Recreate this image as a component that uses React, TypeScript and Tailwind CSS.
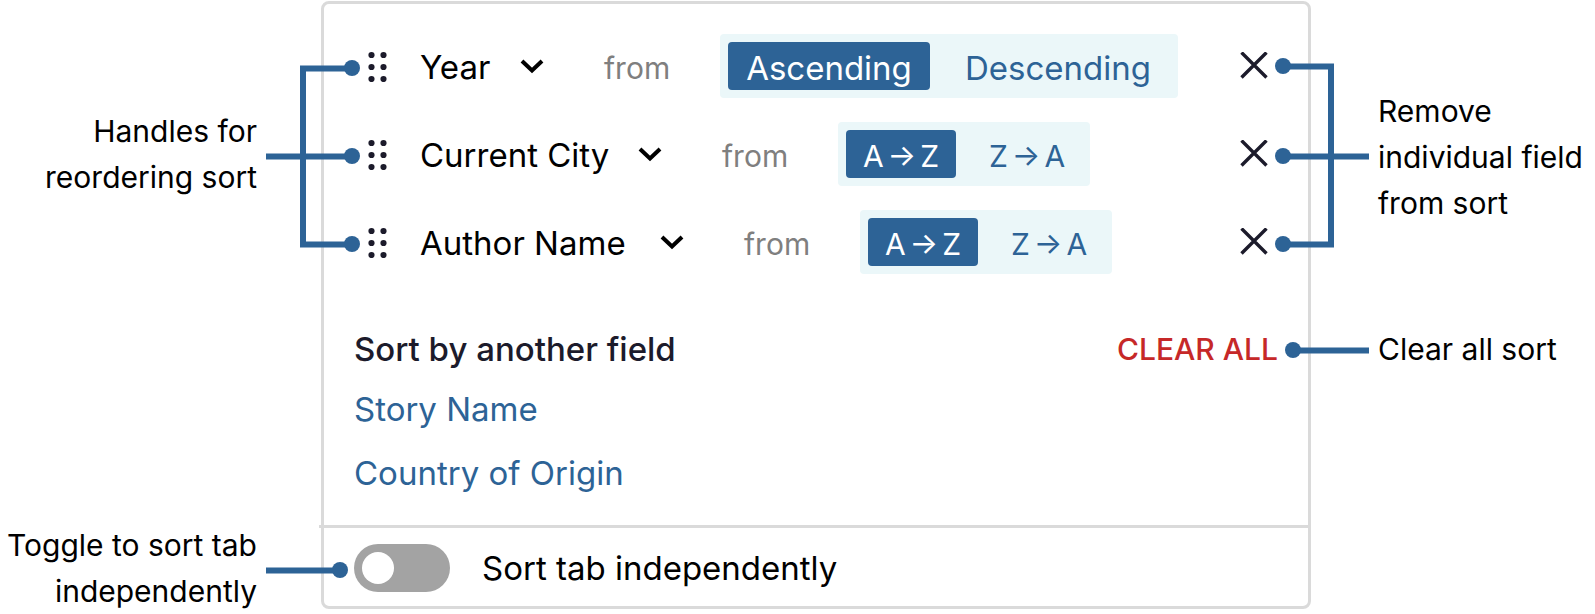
import { useState } from "react";

type SortRow = {
  field: string;
  options: string[];
  selectWidth: string;
  optionWidths: [string, string];
};

const FIELDS = ["Year", "Current City", "Author Name", "Story Name", "Country of Origin"];

const ROWS: SortRow[] = [
  {
    field: "Year",
    options: ["Ascending", "Descending"],
    selectWidth: "w-[124px]",
    optionWidths: ["min-w-[202px]", "min-w-[224px]"],
  },
  {
    field: "Current City",
    options: ["A → Z", "Z → A"],
    selectWidth: "w-[242px]",
    optionWidths: ["min-w-[110px]", "min-w-[110px]"],
  },
  {
    field: "Author Name",
    options: ["A → Z", "Z → A"],
    selectWidth: "w-[264px]",
    optionWidths: ["min-w-[110px]", "min-w-[110px]"],
  },
];

function HandleIcon() {
  return (
    <svg width="20" height="32" viewBox="0 0 20 32" fill="#1c1b2b" aria-hidden="true">
      {[5, 17, 29].map((y) => (
        <g key={y}>
          <circle cx="3.5" cy={y} r="3.1" />
          <circle cx="15.5" cy={y} r="3.1" />
        </g>
      ))}
    </svg>
  );
}

function ChevronIcon() {
  return (
    <svg
      className="pointer-events-none absolute top-1/2 right-0 -translate-y-1/2"
      width="24"
      height="16"
      viewBox="0 0 24 16"
      fill="none"
      stroke="#000"
      strokeWidth="4"
      aria-hidden="true"
    >
      <path d="M2 3 L12 12.5 L22 3" />
    </svg>
  );
}

function CloseIcon() {
  return (
    <svg width="28" height="28" viewBox="0 0 28 28" fill="none" stroke="#1c1b2b" strokeWidth="3.4" aria-hidden="true">
      <path d="M1.5 0.5 L26.5 25.5 M26.5 0.5 L1.5 25.5" />
    </svg>
  );
}

function OptionLabel({ text }: { text: string }) {
  const parts = text.split(" ");
  if (parts.length === 1) return <>{text}</>;
  return (
    <span className="flex items-baseline justify-center gap-1 text-[30px] [font-feature-settings:'case']">
      {parts.map((part) => (
        <span key={part}>{part}</span>
      ))}
    </span>
  );
}

function SortRowItem({ row }: { row: SortRow }) {
  const [active, setActive] = useState(0);
  return (
    <li className="flex h-16 items-center">
      <button type="button" aria-label={`Reorder ${row.field}`} className="ml-3 cursor-grab">
        <HandleIcon />
      </button>
      <div className={`relative ml-8 ${row.selectWidth}`}>
        <select
          aria-label="Sort field"
          defaultValue={row.field}
          className="block w-full cursor-pointer appearance-none bg-transparent pt-0.5 text-black outline-none"
        >
          {FIELDS.map((f) => (
            <option key={f}>{f}</option>
          ))}
        </select>
        <ChevronIcon />
      </div>
      <span className="ml-[60px] w-[68px] pt-1 text-[30px] text-[#7f7f7f]">from</span>
      <div role="group" aria-label="Sort direction" className="ml-12 flex gap-4 rounded bg-[#ebf7f9] p-2">
        {row.options.map((option, i) => (
          <button
            key={option}
            type="button"
            aria-pressed={active === i}
            onClick={() => setActive(i)}
            className={`h-12 rounded pt-0.5 whitespace-nowrap ${row.optionWidths[i]} ${
              active === i ? "bg-[#2d6396] text-white" : "text-[#2d6396]"
            }`}
          >
            <OptionLabel text={option} />
          </button>
        ))}
      </div>
      <button type="button" aria-label={`Remove ${row.field}`} className="mr-2 ml-auto">
        <CloseIcon />
      </button>
    </li>
  );
}

const LABEL = "text-[30px] leading-[46px] text-black";

export default function App() {
  const [independent, setIndependent] = useState(false);
  return (
    <main className="grid grid-cols-[257px_64px_minmax(0,1fr)_67px_217px] bg-white pt-px font-['Inter',sans-serif]">
      <p className={`col-start-1 row-start-1 self-center pb-1 text-right ${LABEL}`}>
        Handles for
        <br />
        reordering sort
      </p>
      <svg
        className="z-10 col-start-2 row-start-1 ml-[9px] self-center justify-self-start"
        width="94"
        height="200"
        viewBox="0 0 94 200"
        aria-hidden="true"
      >
        <path d="M86 12.5 H37 V188.5 H86 M0 100.5 H86" fill="none" stroke="#2d6396" strokeWidth="6" />
        <g fill="#2d6396">
          <circle cx="86" cy="12" r="8" />
          <circle cx="86" cy="100" r="8" />
          <circle cx="86" cy="188" r="8" />
        </g>
      </svg>

      <section
        aria-label="Sort"
        className="col-start-3 row-span-3 row-start-1 grid grid-rows-subgrid rounded-lg border-[3px] border-[#dadada] text-[33px] leading-[48px]"
      >
        <ul className="flex flex-col gap-6 px-8 pt-[30px] pb-[37px]">
          {ROWS.map((row) => (
            <SortRowItem key={row.field} row={row} />
          ))}
        </ul>

        <div className="px-[30px] pt-[14px] pb-7">
          <div className="flex items-center justify-between">
            <h2 className="font-medium text-[#1c1b2b]">Sort by another field</h2>
            <button type="button" className="text-[30px] font-medium text-[#c62828]">
              CLEAR ALL
            </button>
          </div>
          <div className="mt-3 flex flex-col items-start gap-4 text-[#2d6396]">
            <button type="button">Story Name</button>
            <button type="button">Country of Origin</button>
          </div>
        </div>

        <div className="-ml-[5px] border-t-[3px] border-[#dadada] px-[35px] pt-4 pb-[14px]">
          <label className="flex w-fit items-center gap-8">
            <input
              type="checkbox"
              role="switch"
              checked={independent}
              onChange={(e) => setIndependent(e.target.checked)}
              className="flex h-12 w-24 shrink-0 appearance-none items-center rounded-full bg-[#a3a3a3] p-2 before:size-8 before:rounded-full before:bg-white checked:justify-end checked:bg-[#2d6396]"
            />
            <span>Sort tab independently</span>
          </label>
        </div>
      </section>

      <svg
        className="z-10 col-start-4 row-start-1 mr-[9px] self-center justify-self-end"
        width="94"
        height="200"
        viewBox="0 0 94 200"
        aria-hidden="true"
      >
        <path d="M8 10.5 H56 V188.5 H8 M8 100.5 H94" fill="none" stroke="#2d6396" strokeWidth="6" />
        <g fill="#2d6396">
          <circle cx="8" cy="10" r="8" />
          <circle cx="8" cy="100" r="8" />
          <circle cx="8" cy="188" r="8" />
        </g>
      </svg>
      <p className={`col-start-5 row-start-1 self-center pt-0.5 ${LABEL}`}>
        Remove
        <br />
        individual field
        <br />
        from sort
      </p>

      <svg
        className="z-10 col-start-4 row-start-2 mt-[31px] mr-[9px] justify-self-end"
        width="84"
        height="16"
        viewBox="0 0 84 16"
        aria-hidden="true"
      >
        <path d="M8 8.5 H84" stroke="#2d6396" strokeWidth="6" />
        <circle cx="8" cy="8" r="8" fill="#2d6396" />
      </svg>
      <p className={`col-start-5 row-start-2 mt-[15px] ${LABEL}`}>Clear all sort</p>

      <p className={`col-start-1 row-start-3 -mt-[3px] -mb-3 text-right whitespace-nowrap ${LABEL}`}>
        Toggle to sort tab
        <br />
        independently
      </p>
      <svg
        className="z-10 col-start-2 row-start-3 mt-[37px] ml-[9px] justify-self-start"
        width="82"
        height="16"
        viewBox="0 0 82 16"
        aria-hidden="true"
      >
        <path d="M0 8.5 H74" stroke="#2d6396" strokeWidth="6" />
        <circle cx="74" cy="8" r="8" fill="#2d6396" />
      </svg>
    </main>
  );
}
